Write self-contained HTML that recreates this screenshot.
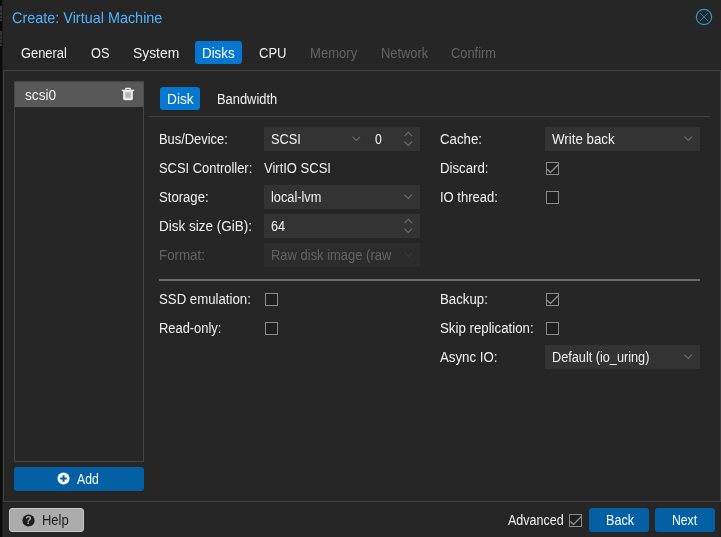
<!DOCTYPE html>
<html lang="en">
<head>
<meta charset="utf-8">
<title>Create: Virtual Machine</title>
<style>
html,body{margin:0;padding:0;}
body{width:721px;height:537px;overflow:hidden;background:#262626;font-family:"Liberation Sans",sans-serif;font-size:14px;color:#f2f2f2;}
#root{position:absolute;left:0;top:0;width:721px;height:537px;overflow:hidden;will-change:transform;}
.b{position:absolute;box-sizing:content-box;}
.f{position:absolute;height:24px;}
.x{position:absolute;white-space:nowrap;line-height:24px;height:24px;transform-origin:0 0;}
.cb{position:absolute;width:11px;height:11px;border:1px solid #8c8c8c;background:#1f1f1f;}
svg{position:absolute;overflow:visible;}
#title{position:absolute;left:12px;top:8px;white-space:nowrap;font-size:15.5px;line-height:20px;height:20px;color:#4db5ff;transform:scaleX(.93) rotate(0.03deg);transform-origin:0 15px;}
</style>
</head>
<body>
<div id="root">
<div class="b" style="left:0;top:0;width:3px;height:537px;background:#0b0b0b"></div>
<div class="b" style="left:2px;top:0;width:1px;height:537px;background:#1a1a1a"></div>
<div class="b" style="left:0;top:6px;width:2px;height:15px;background:#363636"></div>
<div class="b" style="left:0;top:31px;width:2px;height:15px;background:#323232"></div>
<div class="b" style="left:0;top:11px;width:2px;height:1px;background:#1c1c1c"></div>
<div class="b" style="left:0;top:15px;width:2px;height:1px;background:#1c1c1c"></div>
<div class="b" style="left:0;top:18px;width:2px;height:1px;background:#1c1c1c"></div>
<div class="b" style="left:0;top:35px;width:2px;height:1px;background:#1c1c1c"></div>
<div class="b" style="left:0;top:39px;width:2px;height:1px;background:#1c1c1c"></div>
<div class="b" style="left:0;top:43px;width:2px;height:1px;background:#1c1c1c"></div>
<div class="b" style="left:3px;top:0;width:718px;height:537px;background:#262626;border-top-left-radius:5px"></div>
<div id="title">Create: Virtual Machine</div>
<svg style="left:695px;top:8px" width="18" height="18" viewBox="0 0 18 18"><circle cx="9" cy="9" r="7.6" fill="none" stroke="#1f98cf" stroke-width="1.2"/><path d="M5.1 5.1 L12.9 12.9 M12.9 5.1 L5.1 12.9" stroke="#1a84b5" stroke-width="1" fill="none"/></svg>
<div class="b" style="left:195px;top:41px;width:47px;height:23px;background:#0577d0;border-radius:3px"></div>
<div class="b" style="left:3px;top:70px;width:716px;height:430px;border:1px solid #3f3f3f"></div>
<div class="b" style="left:14px;top:81px;width:128px;height:379px;border:1px solid #454545"></div>
<div class="b" style="left:15px;top:82px;width:128px;height:25px;background:#585858"></div>
<div class="b" style="left:143px;top:82px;width:1px;height:25px;background:#4e4e4e"></div>
<svg style="left:121px;top:87px" width="14" height="14" viewBox="0 0 14 14"><path d="M4 2.8 V1.8 Q4 0.8 5 0.8 H9 Q10 0.8 10 1.8 V2.8Z M5.7 2.0 V2.8 H8.3 V2.0Z" fill="#ececec" fill-rule="evenodd"/><rect x="0.8" y="2.7" width="12.4" height="1.4" fill="#ececec"/><path d="M2.1 4 H11.9 V11.6 Q11.9 13.15 10.4 13.15 H3.6 Q2.1 13.15 2.1 11.6Z" fill="#ececec"/><rect x="4.2" y="5.1" width="5.7" height="5.7" fill="#b6b6b6"/></svg>
<div class="b" style="left:14px;top:467px;width:130px;height:24px;background:#0360a5;border-radius:3px"></div>
<svg style="left:57px;top:472.3px" width="13" height="13" viewBox="0 0 13 13"><circle cx="6.5" cy="6.5" r="6.05" fill="#fff"/><path d="M6.5 3.2v6.6M3.2 6.5h6.6" stroke="#0360a5" stroke-width="2.1"/></svg>
<div class="b" style="left:160px;top:87px;width:40px;height:23px;background:#0577d0;border-radius:3px"></div>
<div class="b" style="left:149px;top:116px;width:561px;height:1px;background:#3f3f3f"></div>
<div class="f" style="left:264px;top:127px;width:156px;background:#333"></div>
<svg style="left:352px;top:136px" width="9" height="6" viewBox="0 0 9 6"><path d="M0.4 0.6 L4.25 4.45 L8.1 0.6" fill="none" stroke="#6b6b6b" stroke-width="1.1"/></svg>
<svg style="left:403.8px;top:131.4px" width="9" height="6" viewBox="0 0 9 6"><path d="M0.4 5.15 L4.25 1.3 L8.1 5.15" fill="none" stroke="#6b6b6b" stroke-width="1.1"/></svg><svg style="left:403.8px;top:140.6px" width="9" height="6" viewBox="0 0 9 6"><path d="M0.4 0.6 L4.25 4.45 L8.1 0.6" fill="none" stroke="#6b6b6b" stroke-width="1.1"/></svg>
<div class="f" style="left:264px;top:185px;width:156px;background:#333"></div>
<svg style="left:404px;top:194px" width="9" height="6" viewBox="0 0 9 6"><path d="M0.4 0.6 L4.25 4.45 L8.1 0.6" fill="none" stroke="#6b6b6b" stroke-width="1.1"/></svg>
<div class="f" style="left:264px;top:214px;width:156px;background:#333"></div>
<svg style="left:403.8px;top:218.4px" width="9" height="6" viewBox="0 0 9 6"><path d="M0.4 5.15 L4.25 1.3 L8.1 5.15" fill="none" stroke="#6b6b6b" stroke-width="1.1"/></svg><svg style="left:403.8px;top:227.6px" width="9" height="6" viewBox="0 0 9 6"><path d="M0.4 0.6 L4.25 4.45 L8.1 0.6" fill="none" stroke="#6b6b6b" stroke-width="1.1"/></svg>
<div class="f" style="left:264px;top:243px;width:156px;background:#2c2c2c"></div>
<svg style="left:404px;top:252px" width="9" height="6" viewBox="0 0 9 6"><path d="M0.4 0.6 L4.25 4.45 L8.1 0.6" fill="none" stroke="#3b3b3b" stroke-width="1.1"/></svg>
<div class="f" style="left:545px;top:127px;width:155px;background:#333"></div>
<svg style="left:684px;top:136px" width="9" height="6" viewBox="0 0 9 6"><path d="M0.4 0.6 L4.25 4.45 L8.1 0.6" fill="none" stroke="#6b6b6b" stroke-width="1.1"/></svg>
<div class="f" style="left:545px;top:345px;width:155px;background:#333"></div>
<svg style="left:684px;top:354px" width="9" height="6" viewBox="0 0 9 6"><path d="M0.4 0.6 L4.25 4.45 L8.1 0.6" fill="none" stroke="#6b6b6b" stroke-width="1.1"/></svg>
<div class="cb" style="left:546px;top:162px"></div><svg style="left:546px;top:162px" width="13" height="13" viewBox="0 0 13 13"><path d="M1.2 7.3 L4.4 10.5 L12.4 2.6" fill="none" stroke="#8e8e8e" stroke-width="1.4"/></svg>
<div class="cb" style="left:546px;top:191px"></div>
<div class="cb" style="left:265px;top:293px"></div>
<div class="cb" style="left:265px;top:322px"></div>
<div class="cb" style="left:546px;top:293px"></div><svg style="left:546px;top:293px" width="13" height="13" viewBox="0 0 13 13"><path d="M1.2 7.3 L4.4 10.5 L12.4 2.6" fill="none" stroke="#8e8e8e" stroke-width="1.4"/></svg>
<div class="cb" style="left:546px;top:322px"></div>
<div class="b" style="left:159px;top:279px;width:541px;height:2px;background:#6b6b6b"></div>
<div class="b" style="left:720px;top:502px;width:1px;height:35px;background:#222"></div>
<div class="b" style="left:9px;top:508px;width:73px;height:22px;background:#ababab;border:1px solid #c6c6c6;border-radius:3px"></div>
<svg style="left:22px;top:513.5px" width="13" height="13" viewBox="0 0 13 13"><circle cx="6.5" cy="6.5" r="6.1" fill="#1c1c1c"/><text x="6.5" y="10.2" text-anchor="middle" font-family="Liberation Sans, sans-serif" font-weight="bold" font-size="10.5" fill="#b4b4b4">?</text></svg>
<div class="cb" style="left:569px;top:514px"></div><svg style="left:569px;top:514px" width="13" height="13" viewBox="0 0 13 13"><path d="M1.2 7.3 L4.4 10.5 L12.4 2.6" fill="none" stroke="#8e8e8e" stroke-width="1.4"/></svg>
<div class="b" style="left:589px;top:508px;width:60px;height:24px;background:#0360a5;border-radius:3px"></div>
<div class="b" style="left:655px;top:508px;width:60px;height:24px;background:#0360a5;border-radius:3px"></div>
<div class="x" style="left:21.38px;top:41px;transform:scaleX(0.921);color:#f2f2f2">General</div>
<div class="x" style="left:90.50px;top:41px;transform:scaleX(0.910);color:#f2f2f2">OS</div>
<div class="x" style="left:132.81px;top:41px;transform:scaleX(0.990);color:#f2f2f2">System</div>
<div class="x" style="left:201.95px;top:41px;transform:scaleX(0.952);color:#fff">Disks</div>
<div class="x" style="left:258.57px;top:41px;transform:scaleX(0.929);color:#f2f2f2">CPU</div>
<div class="x" style="left:309.57px;top:41px;transform:scaleX(0.933);color:#636363">Memory</div>
<div class="x" style="left:380.68px;top:41px;transform:scaleX(0.920);color:#636363">Network</div>
<div class="x" style="left:451.38px;top:41px;transform:scaleX(0.919);color:#636363">Confirm</div>
<div class="x" style="left:25.10px;top:83px;transform:scaleX(0.977);color:#f2f2f2">scsi0</div>
<div class="x" style="left:166.72px;top:87px;transform:scaleX(0.977);color:#fff">Disk</div>
<div class="x" style="left:216.68px;top:87px;transform:scaleX(0.920);color:#f2f2f2">Bandwidth</div>
<div class="x" style="left:158.98px;top:127px;transform:scaleX(0.921);color:#f2f2f2">Bus/Device:</div>
<div class="x" style="left:158.93px;top:156px;transform:scaleX(0.922);color:#f2f2f2">SCSI Controller:</div>
<div class="x" style="left:158.56px;top:185px;transform:scaleX(0.937);color:#f2f2f2">Storage:</div>
<div class="x" style="left:158.54px;top:214px;transform:scaleX(0.965);color:#f2f2f2">Disk size (GiB):</div>
<div class="x" style="left:158.55px;top:243px;transform:scaleX(0.952);color:#636363">Format:</div>
<div class="x" style="left:158.56px;top:287px;transform:scaleX(0.944);color:#f2f2f2">SSD emulation:</div>
<div class="x" style="left:158.58px;top:316px;transform:scaleX(0.921);color:#f2f2f2">Read-only:</div>
<div class="x" style="left:439.55px;top:127px;transform:scaleX(0.948);color:#f2f2f2">Cache:</div>
<div class="x" style="left:439.86px;top:156px;transform:scaleX(0.945);color:#f2f2f2">Discard:</div>
<div class="x" style="left:439.57px;top:185px;transform:scaleX(0.929);color:#f2f2f2">IO thread:</div>
<div class="x" style="left:439.86px;top:287px;transform:scaleX(0.945);color:#f2f2f2">Backup:</div>
<div class="x" style="left:439.55px;top:316px;transform:scaleX(0.947);color:#f2f2f2">Skip replication:</div>
<div class="x" style="left:440.30px;top:345px;transform:scaleX(0.947);color:#f2f2f2">Async IO:</div>
<div class="x" style="left:271.09px;top:127px;transform:scaleX(0.913);color:#f2f2f2">SCSI</div>
<div class="x" style="left:375.40px;top:127px;transform:scaleX(0.871);color:#f2f2f2">0</div>
<div class="x" style="left:263.90px;top:156px;transform:scaleX(0.928);color:#f2f2f2">VirtIO SCSI</div>
<div class="x" style="left:271.19px;top:185px;transform:scaleX(0.911);color:#f2f2f2">local-lvm</div>
<div class="x" style="left:271.29px;top:214px;transform:scaleX(0.907);color:#f2f2f2">64</div>
<div class="x" style="left:271.47px;top:243px;transform:scaleX(0.926);color:#636363">Raw disk image (raw</div>
<div class="x" style="left:552.10px;top:127px;transform:scaleX(0.950);color:#f2f2f2">Write back</div>
<div class="x" style="left:551.69px;top:345px;transform:scaleX(0.907);color:#f2f2f2">Default (io_uring)</div>
<div class="x" style="left:41.82px;top:508px;transform:scaleX(0.926);color:#1c1c1c">Help</div>
<div class="x" style="left:508.40px;top:508px;transform:scaleX(0.894);color:#f2f2f2">Advanced</div>
<div class="x" style="left:605.50px;top:508px;transform:scaleX(0.900);color:#fff">Back</div>
<div class="x" style="left:672.10px;top:508px;transform:scaleX(0.870);color:#fff">Next</div>
<div class="x" style="left:77.40px;top:467px;transform:scaleX(0.871);color:#fff">Add</div>
</div>
</body>
</html>
